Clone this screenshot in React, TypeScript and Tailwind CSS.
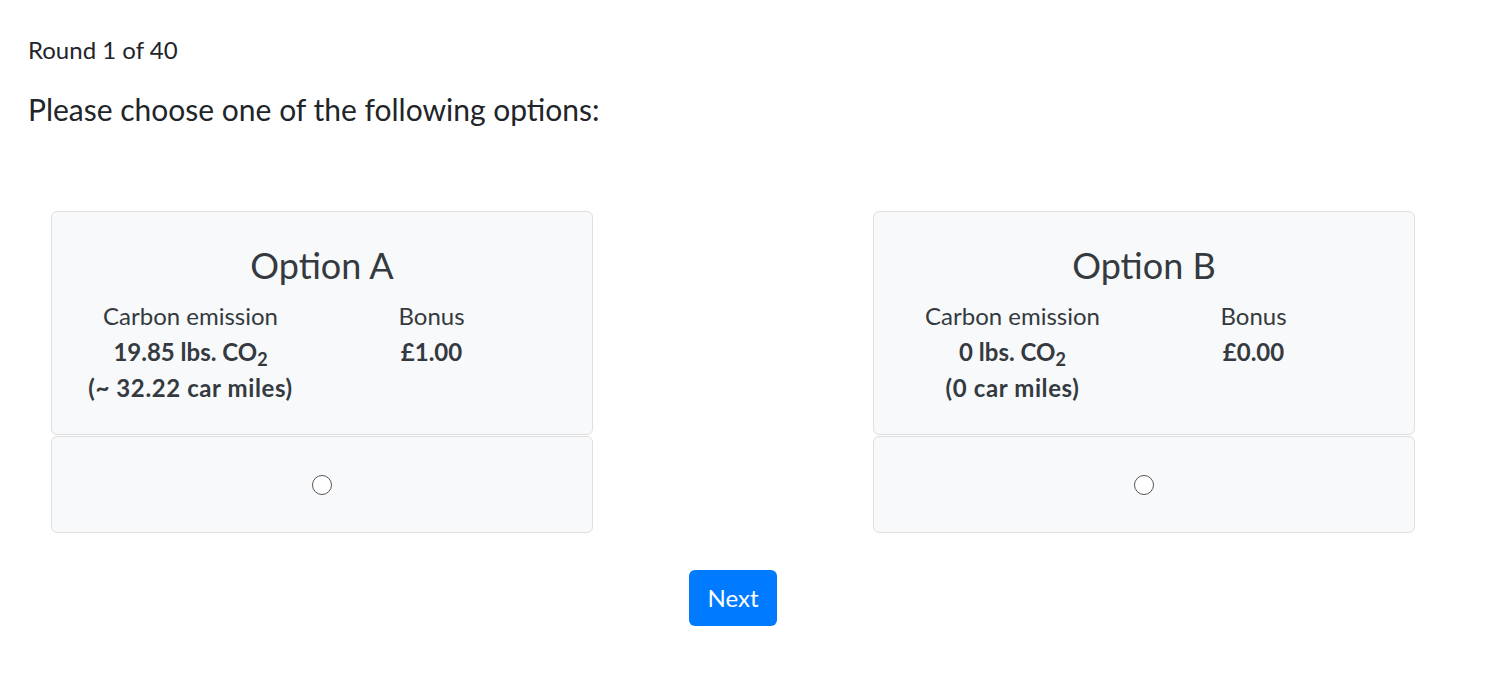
type Opt = {
  title: string;
  co2: string;
  miles: string;
  bonus: string;
};

const options: Opt[] = [
  { title: "Option A", co2: "19.85", miles: "(~ 32.22 car miles)", bonus: "£1.00" },
  { title: "Option B", co2: "0", miles: "(0 car miles)", bonus: "£0.00" },
];

function OptionCard({ o }: { o: Opt }) {
  return (
    <div className="w-[542px] flex flex-col">
      <div className="h-[224px] rounded-[6px] border border-[#dfdfdf] bg-[#f8f9fa] pt-[29px] text-[#343a40]">
        <div className="text-center text-[36px] leading-[48px]">{o.title}</div>
        <div className="mt-[9px] flex pl-[18px] text-[24px] leading-[36px]">
          <div className="w-[241px] text-center">
            <div>Carbon emission</div>
            <div className="font-bold">
              {o.co2} lbs. CO<sub>2</sub>
            </div>
            <div className="font-bold tracking-[0.6px]">{o.miles}</div>
          </div>
          <div className="w-[241px] text-center">
            <div>Bonus</div>
            <div className="font-bold">{o.bonus}</div>
          </div>
        </div>
      </div>
      <div className="mt-px flex h-[97px] items-center justify-center rounded-[6px] border border-[#dfdfdf] bg-[#f8f9fa]">
        <div className="h-[20px] w-[20px] rounded-full border border-[#555555] bg-white" />
      </div>
    </div>
  );
}

export default function App() {
  return (
    <div
      className="w-[1466px] px-[28px] text-[#212529]"
      style={{ fontFamily: "Lato, 'Noto Sans', sans-serif" }}
    >
      <div className="pt-[32px] text-[24px] leading-[36px]">Round 1 of 40</div>
      <div className="mt-[23px] text-[30px] leading-[36px]">Please choose one of the following options:</div>
      <div className="mt-[84px] flex justify-between px-[23px]">
        {options.map((o) => (
          <OptionCard key={o.title} o={o} />
        ))}
      </div>
      <div className="mt-[37px] flex justify-center">
        <button className="h-[56px] w-[88px] rounded-[6px] bg-[#007bff] text-[24px] text-white">
          Next
        </button>
      </div>
    </div>
  );
}
